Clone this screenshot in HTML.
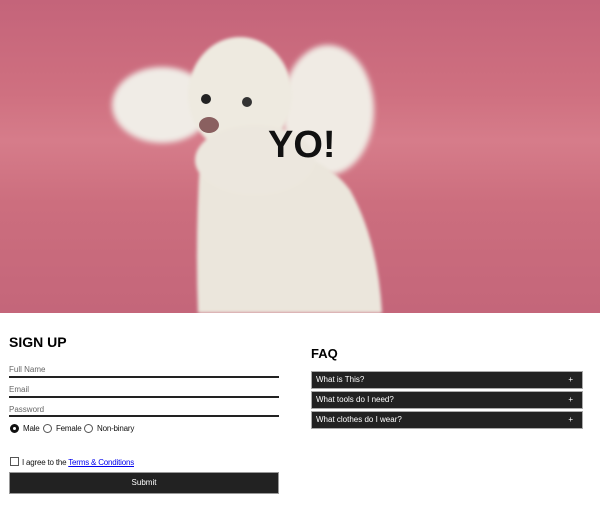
<!DOCTYPE html>
<html><head><style>
*{margin:0;padding:0;box-sizing:border-box}
body{width:600px;height:506px;background:#fff;font-family:"Liberation Sans",sans-serif;position:relative;overflow:hidden}
.hero{position:absolute;left:0;top:0;width:600px;height:313px;background:linear-gradient(180deg,#c4647a 0%,#cf7080 30%,#d67c8a 45%,#cc6e7e 65%,#c4667a 100%)}
.t{position:absolute;font-size:8px;color:#111;letter-spacing:-0.2px}
.lab{position:absolute;left:9px;font-size:8px;color:#666}
.line{position:absolute;left:9px;width:270px;height:2px;background:#222}
.faq{position:absolute;left:311px;width:272px;height:18px;background:#222;border:1px solid #aaa;color:#fff;font-size:8px;line-height:16px;padding-left:4px}
.faq span{position:absolute;right:9px;top:0}
.rad{position:absolute;width:9px;height:9px;border-radius:50%;border:1px solid #555;top:424px}
</style></head><body>
<div class="hero">
<svg width="600" height="313" style="position:absolute;left:0;top:0">
<defs><filter id="b"><feGaussianBlur stdDeviation="3"/></filter><filter id="b2"><feGaussianBlur stdDeviation="1.5"/></filter></defs>
<g filter="url(#b)">
<ellipse cx="162" cy="105" rx="50" ry="38" fill="#f0ece6"/>
<ellipse cx="328" cy="110" rx="46" ry="65" fill="#f0ebe4"/>
</g>
<g filter="url(#b2)">
<ellipse cx="240" cy="95" rx="52" ry="58" fill="#eeeae0"/>
<path d="M200 160 Q195 240 198 313 L382 313 Q378 240 350 190 Q320 150 260 150 Z" fill="#ebe6dc"/>
<ellipse cx="255" cy="160" rx="60" ry="35" fill="#ece7de"/>
</g>
<circle cx="206" cy="99" r="5" fill="#222"/>
<circle cx="247" cy="102" r="5" fill="#333"/>
<ellipse cx="209" cy="125" rx="10" ry="8" fill="#8a6060"/>
</svg>
<div style="position:absolute;left:268px;top:124px;font-size:38px;font-weight:bold;color:#111">YO!</div>
</div>
<div style="position:absolute;left:9px;top:334px;font-size:14px;font-weight:bold;color:#000">SIGN UP</div>
<div class="lab" style="top:365px">Full Name</div><div class="line" style="top:376px"></div>
<div class="lab" style="top:385px">Email</div><div class="line" style="top:396px"></div>
<div class="lab" style="top:405px">Password</div><div class="line" style="top:415px"></div>
<div class="rad" style="left:10px;border:3px solid #111;background:#fff"></div>
<div class="t" style="left:23px;top:424px">Male</div>
<div class="rad" style="left:43px"></div>
<div class="t" style="left:56px;top:424px">Female</div>
<div class="rad" style="left:84px"></div>
<div class="t" style="left:97px;top:424px">Non-binary</div>
<div style="position:absolute;left:10px;top:457px;width:9px;height:9px;border:1px solid #555"></div>
<div class="t" style="left:22px;top:458px">I agree to the <span style="color:#00e;text-decoration:underline">Terms &amp; Conditions</span></div>
<div style="position:absolute;left:9px;top:472px;width:270px;height:22px;background:#222;border:1px solid #999;color:#fff;font-size:8px;text-align:center;line-height:20px">Submit</div>
<div style="position:absolute;left:311px;top:346px;font-size:13px;font-weight:bold;color:#000">FAQ</div>
<div class="faq" style="top:371px">What is This?<span>+</span></div>
<div class="faq" style="top:391px">What tools do I need?<span>+</span></div>
<div class="faq" style="top:411px">What clothes do I wear?<span>+</span></div>
</body></html>
